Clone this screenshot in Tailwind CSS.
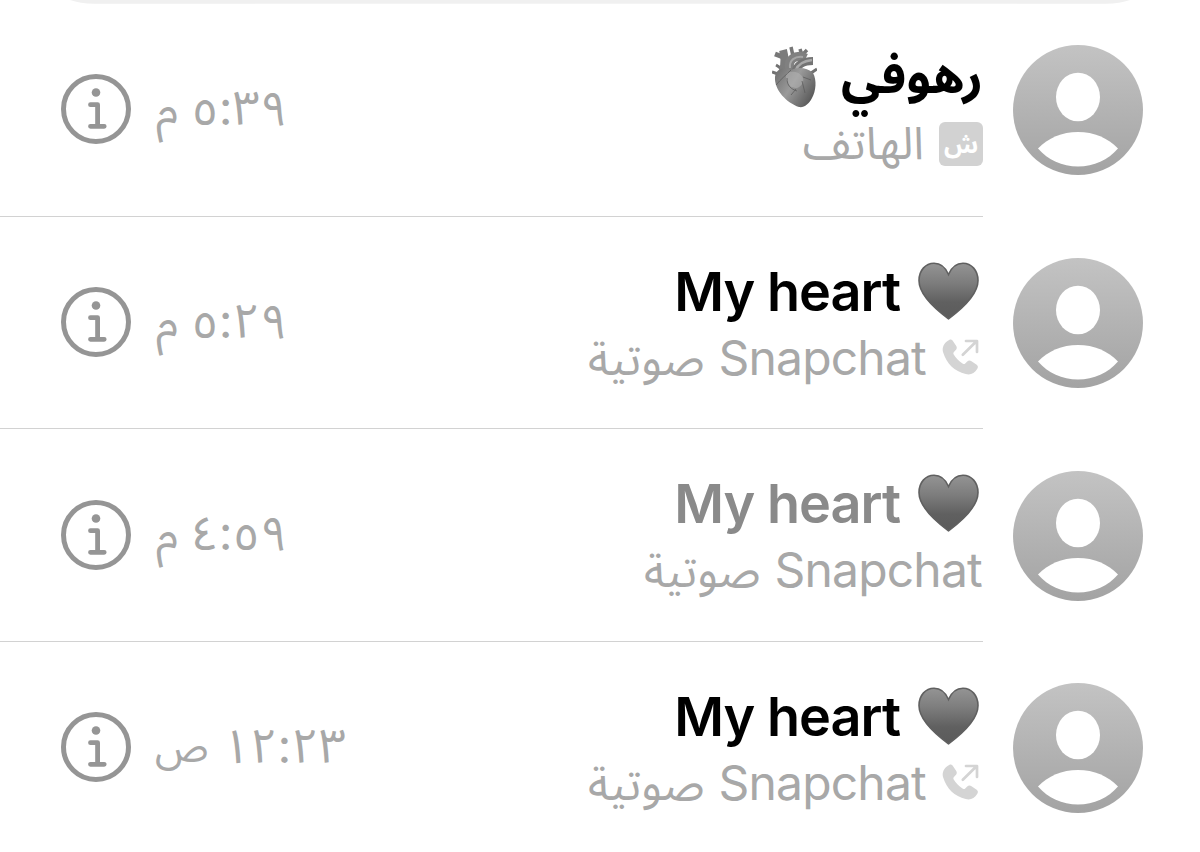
<!DOCTYPE html>
<html lang="ar" dir="rtl">
<head>
  <meta charset="UTF-8" />
  <title>المكالمات</title>
  <meta name="viewport" content="width=device-width, initial-scale=1.0" />
  <script src="https://cdn.jsdelivr.net/npm/@tailwindcss/browser@4"></script>
</head>
<body class="h-[852px] overflow-hidden bg-white font-['Inter','Noto_Sans_Arabic','DejaVu_Sans',sans-serif]">

  <!-- shared icons -->
  <svg class="absolute w-0 h-0" aria-hidden="true">
    <defs>
      <linearGradient id="avatarFill" x1="0" y1="0" x2="0" y2="1">
        <stop offset="0" stop-color="#c3c3c3" />
        <stop offset="1" stop-color="#a3a3a3" />
      </linearGradient>
      <linearGradient id="heartFill" x1="0" y1="0" x2="0" y2="1">
        <stop offset="0" stop-color="#949494" />
        <stop offset="0.35" stop-color="#7d7d7d" />
        <stop offset="0.7" stop-color="#606060" />
        <stop offset="1" stop-color="#5b5b5b" />
      </linearGradient>
      <linearGradient id="organFill" x1="0" y1="0" x2="1" y2="0.6">
        <stop offset="0" stop-color="#6c6c6c" />
        <stop offset="0.5" stop-color="#9a9a9a" />
        <stop offset="1" stop-color="#5c5c5c" />
      </linearGradient>
      <symbol id="avatar" viewBox="0 0 130 130">
        <circle cx="65" cy="65" r="65" fill="url(#avatarFill)" />
        <ellipse cx="65" cy="52" rx="22" ry="24.3" fill="#fff" />
        <path d="M25 103.5C35 93 49 87 65 87s30 6 40 16.500C95 115 81 121.500 65 121.500S35 115 25 103.500Z" fill="#fff" />
      </symbol>
      <symbol id="info" viewBox="0 0 70 70">
        <circle cx="35" cy="35" r="32.500" fill="none" stroke="#959595" stroke-width="5" />
        <circle cx="35" cy="18.500" r="4.300" fill="#959595" />
        <path d="M29.500 30.700H36.600V52M29.500 52.300H43.200" fill="none" stroke="#959595" stroke-width="4.800" stroke-linecap="round" stroke-linejoin="round" />
      </symbol>
      <symbol id="heart" viewBox="0 0 61 58">
        <path d="M30.500 56.800C20 49 1 34 1 18.500 1 8.500 7.500 1.200 16 1.200c6.500 0 11.500 4 14.500 11.300C33.500 5.200 38.500 1.200 45 1.200c8.500 0 15 7.300 15 17.300 0 15.500-19 30.500-29.500 38.300Z" fill="url(#heartFill)" stroke="#606060" stroke-width="1.600" />
      </symbol>
      <symbol id="outgoing" viewBox="0 0 37 37">
        <path d="M7.300.9C8.700.2 10 .8 10.900 2.100l3.200 4.700c1 1.500.9 3-.3 4.300l-1.900 2c-.7.800-.7 1.500-.2 2.400 2 3.500 5.400 6.900 9.200 9.200.9.500 1.600.5 2.300-.2l2-2c1.300-1.200 2.800-1.300 4.300-.3l4.800 3.300c1.700 1.200 2 2.700 1 4.300-2.800 4.600-6.700 6.500-11.600 5.300C12.500 32.500 4.500 24.500 1.100 13.300-.4 8.300 2.300 3.300 7.300.9Z" fill="#d4d4d4" />
        <path d="M20.800 15.800 34.500 2.300M24 2H35V13" fill="none" stroke="#d4d4d4" stroke-width="2.700" stroke-linecap="round" stroke-linejoin="round" />
      </symbol>
    </defs>
  </svg>

  <svg class="block h-[4px] w-full" viewBox="0 0 1200 4"><path d="M70 0H1130Q1120 3.700 1106 3.700H94Q80 3.700 70 0Z" fill="#f0f0f0" /></svg>

  <main>
    <section class="flex items-center h-[212.7px] pr-[57px]">
      <svg class="size-[130px] shrink-0"><use href="#avatar" /></svg>
      <div class="flex flex-1 items-center h-full mr-[30px] pl-[61px] border-b border-[#d2d2d2]">
        <div class="flex-1 pt-0.5">
          <div class="flex items-center h-[66px] gap-6">
            <span class="text-[50px] leading-[66px] font-bold text-black -translate-y-0.5">رهوفي</span>
            <svg class="w-[45px] h-[62px]" viewBox="0 0 45 62">
              <g fill="none" stroke-linecap="butt">
                <path d="M4 19c4 2 6 4 7 8M0 26l6 2M45 23l-6 4" stroke="#727272" stroke-width="3" />
                <path d="M3 8l8 3" stroke="#777" stroke-width="5" />
                <path d="M11 4c2 7 2 14 0 21" stroke="#7c7c7c" stroke-width="8" />
                <path d="M19 1l2 9M28 3l2 6M35 4l-5 5" stroke="#777" stroke-width="3.500" />
                <path d="M19 27C13 12 25 8 34 12" stroke="#808080" stroke-width="9" />
                <path d="M18 22c-1-8 5-12 13-11" stroke="#a5a5a5" stroke-width="2" />
                <path d="M23 28c1-9 8-13 18-13" stroke="#747474" stroke-width="8" />
                <path d="M24 24c2-6 8-9 16-10" stroke="#a9a9a9" stroke-width="2.500" />
              </g>
              <path d="M3 31C4 22 12 21 19 24c6-3 16-3 22 3 4 7 3 18-1 25-3 6-8 10-13 9C15 57 2 44 3 31Z" fill="url(#organFill)" />
              <path d="M15 27c7-3 14 0 16 5 1 4-1 8-6 10-4 0-9-2-10-7-2-3-1-6 0-8Z" fill="#b4b4b4" opacity=".55" />
              <path d="M4 39C9 33 14 29 19 24M15 32c0 8 4 11 10 13M31 31l8 3M30 35l3 12M24 43l-5 6" fill="none" stroke="#5c5c5c" stroke-width=".8" />
            </svg>
          </div>
          <div class="flex items-center h-[68px] gap-[15px]">
            <span class="flex items-center justify-center size-[44px] rounded-[6px] bg-[#d2d2d2] text-white text-[25px] leading-[44px] font-bold"><span>ش</span></span>
            <span class="text-[45px] leading-[68px] text-[#a8a8a8] -translate-y-px">الهاتف</span>
          </div>
        </div>
        <time class="flex items-center gap-[13px] ml-[25px] h-[70px] text-[46px] leading-[66px] text-[#a8a8a8] -translate-y-0.5"><span class="text-[48px]">٥:٣٩</span><span>م</span></time>
        <svg class="size-[70px] mb-px"><use href="#info" /></svg>
      </div>
    </section>

    <section class="flex items-center h-[212.7px] pr-[57px]">
      <svg class="size-[130px] shrink-0"><use href="#avatar" /></svg>
      <div class="flex flex-1 items-center h-full mr-[30px] pl-[61px] border-b border-[#d2d2d2]">
        <div class="flex-1 pt-1">
          <div class="flex items-center h-[66px] gap-[18px] pr-[4px]">
            <svg class="w-[61px] h-[58px]"><use href="#heart" /></svg>
            <span dir="ltr" class="text-[54px] leading-[66px] tracking-[-1px] font-semibold text-black translate-y-px">My heart</span>
          </div>
          <div class="flex items-center h-[68px] pr-[4px]">
            <svg class="size-[37px] ml-4"><use href="#outgoing" /></svg>
            <span class="ml-[14px] text-[48px] leading-[68px] tracking-[-0.8px] text-[#a8a8a8]">Snapchat</span>
            <span class="text-[46px] leading-[68px] text-[#a8a8a8]">صوتية</span>
          </div>
        </div>
        <time class="flex items-center gap-[13px] ml-[25px] h-[70px] text-[46px] leading-[66px] text-[#a8a8a8] -translate-y-0.5"><span class="text-[48px]">٥:٢٩</span><span>م</span></time>
        <svg class="size-[70px] mb-px"><use href="#info" /></svg>
      </div>
    </section>

    <section class="flex items-center h-[212.7px] pr-[57px]">
      <svg class="size-[130px] shrink-0"><use href="#avatar" /></svg>
      <div class="flex flex-1 items-center h-full mr-[30px] pl-[61px] border-b border-[#d2d2d2]">
        <div class="flex-1 pt-1">
          <div class="flex items-center h-[66px] gap-[18px] pr-[4px]">
            <svg class="w-[61px] h-[58px]"><use href="#heart" /></svg>
            <span dir="ltr" class="text-[54px] leading-[66px] tracking-[-1px] font-semibold text-[#8a8a8a] translate-y-px">My heart</span>
          </div>
          <div class="flex items-center h-[68px] pr-px">
            <span class="ml-[14px] text-[48px] leading-[68px] tracking-[-0.8px] text-[#a8a8a8]">Snapchat</span>
            <span class="text-[46px] leading-[68px] text-[#a8a8a8]">صوتية</span>
          </div>
        </div>
        <time class="flex items-center gap-[13px] ml-[25px] h-[70px] text-[46px] leading-[66px] text-[#a8a8a8] -translate-y-0.5"><span class="text-[48px]">٤:٥٩</span><span>م</span></time>
        <svg class="size-[70px] mb-px"><use href="#info" /></svg>
      </div>
    </section>

    <section class="flex items-center h-[212.7px] pr-[57px]">
      <svg class="size-[130px] shrink-0"><use href="#avatar" /></svg>
      <div class="flex flex-1 items-center h-full mr-[30px] pl-[61px] border-b border-transparent">
        <div class="flex-1 pt-1">
          <div class="flex items-center h-[66px] gap-[18px] pr-[4px]">
            <svg class="w-[61px] h-[58px]"><use href="#heart" /></svg>
            <span dir="ltr" class="text-[54px] leading-[66px] tracking-[-1px] font-semibold text-black translate-y-px">My heart</span>
          </div>
          <div class="flex items-center h-[68px] pr-[4px]">
            <svg class="size-[37px] ml-4"><use href="#outgoing" /></svg>
            <span class="ml-[14px] text-[48px] leading-[68px] tracking-[-0.8px] text-[#a8a8a8]">Snapchat</span>
            <span class="text-[46px] leading-[68px] text-[#a8a8a8]">صوتية</span>
          </div>
        </div>
        <time class="flex items-center gap-[14px] ml-[24px] h-[70px] text-[41px] leading-[66px] text-[#a8a8a8] -translate-y-0.5"><span class="text-[48px]">١٢:٢٣</span><span>ص</span></time>
        <svg class="size-[70px] mb-px"><use href="#info" /></svg>
      </div>
    </section>
  </main>

</body>
</html>
